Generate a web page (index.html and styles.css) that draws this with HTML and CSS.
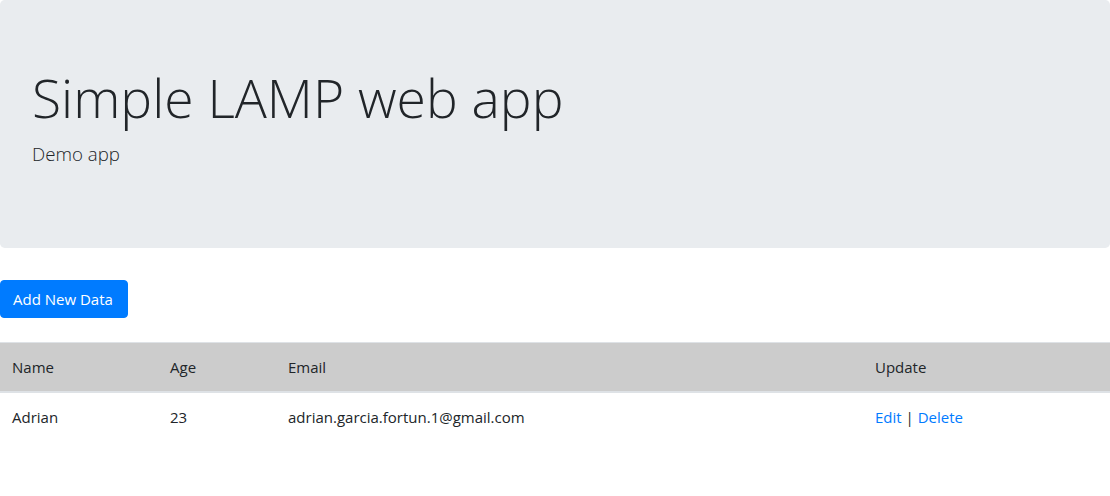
FILE: index.html
```html
<!DOCTYPE html>
<html>
<head>
<meta charset="utf-8">
<link rel="stylesheet" href="styles.css">
</head>
<body>
<div class="jumbotron">
  <h1 class="display">Simple LAMP web app</h1>
  <p class="lead">Demo app</p>
</div>
<div class="actions">
  <a class="btn" href="#">Add New Data</a>
</div>
<table class="table">
  <thead>
    <tr>
      <th class="c-name">Name</th>
      <th class="c-age">Age</th>
      <th class="c-email">Email</th>
      <th class="c-update">Update</th>
    </tr>
  </thead>
  <tbody>
    <tr>
      <td>Adrian</td>
      <td>23</td>
      <td>adrian.garcia.fortun.1@gmail.com</td>
      <td><a href="#">Edit</a> | <a href="#">Delete</a></td>
    </tr>
  </tbody>
</table>
</body>
</html>
```
FILE: styles.css
```css
* { box-sizing: border-box; }
body {
  margin: 0;
  font-family: "Open Sans", "Noto Sans", sans-serif;
  font-size: 15px;
  line-height: 24px;
  color: #212529;
  background: #fff;
}
.jumbotron {
  background: #e9ecef;
  border-radius: 4.8px;
  padding: 64px 32px 63px;
  margin-bottom: 32px;
}
.display {
  font-size: 53.4px;
  font-weight: 300;
  line-height: 67px;
  margin: 0 0 8px;
}
.lead {
  font-size: 18.7px;
  font-weight: 300;
  line-height: 30px;
  margin: 0 0 16px;
}
.actions { margin-bottom: 24px; }
.btn {
  display: inline-block;
  background: #007bff;
  color: #fff;
  border: 1px solid #007bff;
  border-radius: 4px;
  padding: 6px 14px 6px 12px;
  text-decoration: none;
  font-size: 15px;
  line-height: 24px;
}
.table {
  width: 100%;
  border-collapse: collapse;
}
.table th, .table td {
  padding: 12px;
  text-align: left;
  vertical-align: top;
  border-top: 1px solid #dee2e6;
}
.table th { font-weight: 400; }
.table thead th {
  background: #cccccc;
  border-bottom: 2px solid #dee2e6;
}
.c-name { width: 158px; }
.c-age { width: 118px; }
.c-email { width: 587px; }
a { color: #007bff; text-decoration: none; }
```
